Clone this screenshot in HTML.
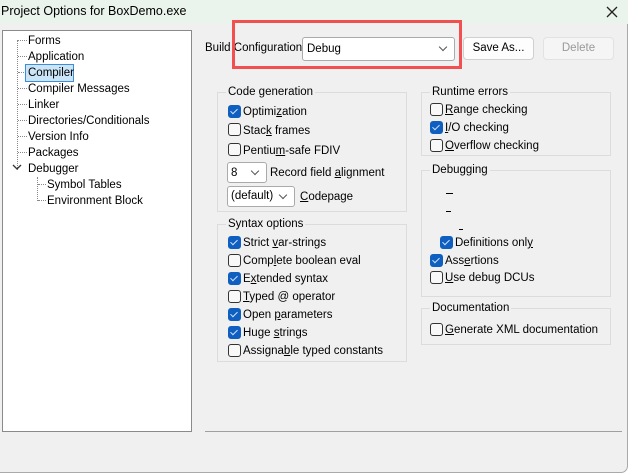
<!DOCTYPE html>
<html><head><style>
*{margin:0;padding:0;box-sizing:border-box}
body{width:633px;height:475px;background:#fff;font-family:"Liberation Sans",sans-serif;font-size:11.5px;line-height:15px;color:#000;position:relative;overflow:hidden}
.win{position:absolute;left:0;top:0;width:628px;height:473px;background:#f0f0f0;border-right:1px solid #aaa;border-bottom:1px solid #aaa;border-bottom-right-radius:7px}
.title{position:absolute;left:0;top:0;width:628px;height:24px;background:#eaf3ec;}
.title span{position:absolute;left:1px;top:4px;font-size:12.5px}
.a{position:absolute;white-space:nowrap}
.tree{position:absolute;left:2px;top:30px;width:190px;height:402px;background:#fff;border:1px solid #8a8a8a}
.grp{position:absolute;border:1px solid #dcdcdc}
.grp>b{position:absolute;left:8px;top:-8px;background:#f0f0f0;padding:0 2px;font-weight:normal}
.cb{position:absolute;width:13px;height:13px;border:1px solid #333;border-radius:3px;background:#f8f8f8}
.cb.on{background:#0f5fc0;border-color:#0f5fc0}
.cb.on:after{content:"";position:absolute;left:3px;top:1px;width:3px;height:6px;border:solid #cfe0f8;border-width:0 1px 1px 0;transform:rotate(45deg)}
.cmb{position:absolute;background:#fff;border:1px solid #aaa;border-radius:3px}
.cmb:after{content:"";position:absolute;right:8px;top:50%;width:5px;height:5px;margin-top:-5px;border:solid #555;border-width:0 1px 1px 0;transform:rotate(45deg)}
.btn{position:absolute;border:1px solid #d0d0d0;border-radius:4px;background:#fdfdfd;text-align:center;line-height:21px}
.dot{position:absolute;border-top:1px dotted #888}
.dv{position:absolute;border-left:1px dotted #888}
u{text-decoration:underline}
</style></head><body>
<div class="win">
<div class="title"><span>Project Options for BoxDemo.exe</span>
<svg style="position:absolute;left:606px;top:6px" width="12" height="12"><path d="M1 1L11 11M11 1L1 11" stroke="#222" stroke-width="1.3"/></svg></div>

<div class="tree">
<div class="dv" style="left:14px;top:9px;height:130px"></div>
<div class="dot" style="left:15px;top:9px;width:9px"></div><div class="a" style="left:25px;top:3px">Forms</div>
<div class="dot" style="left:15px;top:25px;width:9px"></div><div class="a" style="left:25px;top:19px">Application</div>
<div class="dot" style="left:15px;top:41px;width:8px"></div><div class="a" style="left:22px;top:33px;width:49px;height:18px;border:1px solid #3b8fd8;background:#cce4f7"></div><div class="a" style="left:25px;top:35px">Compiler</div>
<div class="dot" style="left:15px;top:57px;width:9px"></div><div class="a" style="left:25px;top:51px">Compiler Messages</div>
<div class="dot" style="left:15px;top:73px;width:9px"></div><div class="a" style="left:25px;top:67px">Linker</div>
<div class="dot" style="left:15px;top:89px;width:9px"></div><div class="a" style="left:25px;top:83px">Directories/Conditionals</div>
<div class="dot" style="left:15px;top:105px;width:9px"></div><div class="a" style="left:25px;top:99px">Version Info</div>
<div class="dot" style="left:15px;top:121px;width:9px"></div><div class="a" style="left:25px;top:115px">Packages</div>
<svg class="a" style="left:9px;top:133px" width="10" height="7"><path d="M1 1L5 5L9 1" stroke="#333" fill="none" stroke-width="1.3"/></svg>
<div class="a" style="left:25px;top:131px">Debugger</div>
<div class="dv" style="left:34px;top:146px;height:24px"></div>
<div class="dot" style="left:35px;top:153px;width:8px"></div><div class="a" style="left:44px;top:147px">Symbol Tables</div>
<div class="dot" style="left:35px;top:169px;width:8px"></div><div class="a" style="left:44px;top:163px">Environment Block</div>
</div>

<div class="a" style="left:205px;top:41px">Build Configuration</div>
<div class="cmb" style="left:302px;top:37px;width:153px;height:24px"><span class="a" style="left:4px;top:4px">Debug</span></div>
<div class="a" style="left:232px;top:20px;width:230px;height:49px;border:3px solid #f25050"></div>
<div class="btn" style="left:463px;top:37px;width:71px;height:23px">Save As...</div>
<div class="btn" style="left:543px;top:37px;width:71px;height:23px;color:#999;background:#f5f5f5;border-color:#e2e2e2">Delete</div>

<div class="grp" style="left:217px;top:92px;width:190px;height:120px"><b>Code generation</b></div>
<div class="cb on" style="left:228px;top:105px"></div><div class="a" style="left:243px;top:105px">Optimi<u>z</u>ation</div>
<div class="cb" style="left:228px;top:123px"></div><div class="a" style="left:243px;top:124px">Stac<u>k</u> frames</div>
<div class="cb" style="left:228px;top:143px"></div><div class="a" style="left:243px;top:144px">Pentiu<u>m</u>-safe FDIV</div>
<div class="cmb" style="left:227px;top:162px;width:40px;height:21px"><span class="a" style="left:3px;top:3px">8</span></div><div class="a" style="left:270px;top:166px">Record field <u>a</u>lignment</div>
<div class="cmb" style="left:227px;top:186px;width:68px;height:21px"><span class="a" style="left:3px;top:2px">(default)</span></div><div class="a" style="left:300px;top:190px"><u>C</u>odepage</div>

<div class="grp" style="left:217px;top:224px;width:190px;height:138px"><b>Syntax options</b></div>
<div class="cb on" style="left:228px;top:236px"></div><div class="a" style="left:243px;top:236px">Strict <u>v</u>ar-strings</div>
<div class="cb" style="left:228px;top:254px"></div><div class="a" style="left:243px;top:254px">Comp<u>l</u>ete boolean eval</div>
<div class="cb on" style="left:228px;top:272px"></div><div class="a" style="left:243px;top:272px">E<u>x</u>tended syntax</div>
<div class="cb" style="left:228px;top:290px"></div><div class="a" style="left:243px;top:290px"><u>T</u>yped @ operator</div>
<div class="cb on" style="left:228px;top:308px"></div><div class="a" style="left:243px;top:308px">Open <u>p</u>arameters</div>
<div class="cb on" style="left:228px;top:326px"></div><div class="a" style="left:243px;top:326px">Huge <u>s</u>trings</div>
<div class="cb" style="left:228px;top:344px"></div><div class="a" style="left:243px;top:344px">Assigna<u>b</u>le typed constants</div>

<div class="grp" style="left:421px;top:92px;width:190px;height:64px"><b>Runtime errors</b></div>
<div class="cb" style="left:430px;top:103px"></div><div class="a" style="left:445px;top:103px"><u>R</u>ange checking</div>
<div class="cb on" style="left:430px;top:121px"></div><div class="a" style="left:445px;top:121px"><u>I</u>/O checking</div>
<div class="cb" style="left:430px;top:139px"></div><div class="a" style="left:445px;top:139px"><u>O</u>verflow checking</div>

<div class="grp" style="left:421px;top:170px;width:190px;height:127px"><b>Debugging</b></div>
<div class="a" style="left:446px;top:193px;width:7px;border-top:1px solid #000"></div>
<div class="a" style="left:446px;top:211px;width:5px;border-top:1px solid #000"></div>
<div class="a" style="left:459px;top:229px;width:4px;border-top:1px solid #000"></div>
<div class="cb on" style="left:440px;top:236px"></div><div class="a" style="left:455px;top:236px">Definitions onl<u>y</u></div>
<div class="cb on" style="left:430px;top:254px"></div><div class="a" style="left:445px;top:254px">Ass<u>e</u>rtions</div>
<div class="cb" style="left:430px;top:271px"></div><div class="a" style="left:445px;top:271px"><u>U</u>se debug DCUs</div>

<div class="grp" style="left:421px;top:308px;width:190px;height:37px"><b>Documentation</b></div>
<div class="cb" style="left:430px;top:323px"></div><div class="a" style="left:445px;top:323px"><u>G</u>enerate XML documentation</div>

<div class="a" style="left:205px;top:431px;width:417px;border-top:1px solid #a0a0a0"></div>
</div>
</body></html>
